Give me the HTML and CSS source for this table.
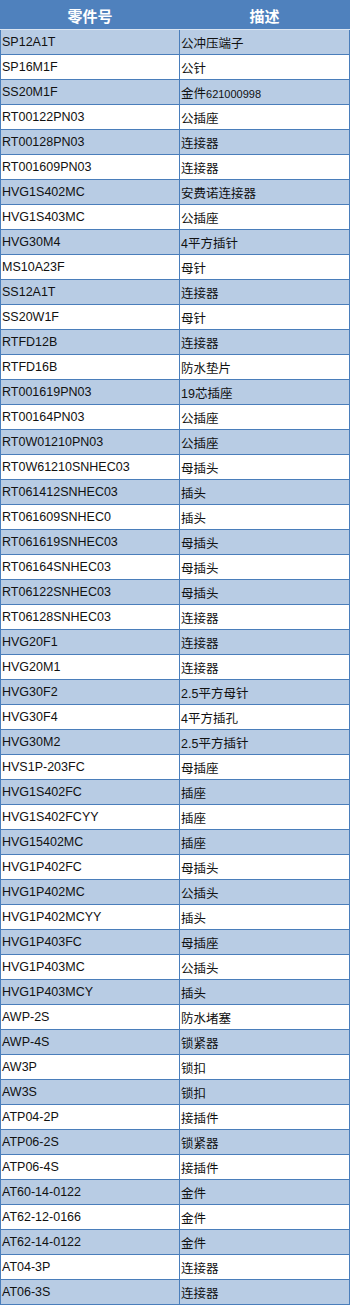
FILE: index.html
```html
<!DOCTYPE html>
<html lang="zh">
<head>
<meta charset="utf-8">
<title>零件号</title>
<link rel="stylesheet" href="styles.css">
</head>
<body>
<table class="parts">
<thead>
<tr><th class="c1">零件号</th><th class="c2">描述</th></tr>
</thead>
<tbody>
<tr><td>SP12A1T</td><td>公冲压端子</td></tr>
<tr><td>SP16M1F</td><td>公针</td></tr>
<tr><td>SS20M1F</td><td>金件<span class="num">621000998</span></td></tr>
<tr><td>RT00122PN03</td><td>公插座</td></tr>
<tr><td>RT00128PN03</td><td>连接器</td></tr>
<tr><td>RT001609PN03</td><td>连接器</td></tr>
<tr><td>HVG1S402MC</td><td>安费诺连接器</td></tr>
<tr><td>HVG1S403MC</td><td>公插座</td></tr>
<tr><td>HVG30M4</td><td>4平方插针</td></tr>
<tr><td>MS10A23F</td><td>母针</td></tr>
<tr><td>SS12A1T</td><td>连接器</td></tr>
<tr><td>SS20W1F</td><td>母针</td></tr>
<tr><td>RTFD12B</td><td>连接器</td></tr>
<tr><td>RTFD16B</td><td>防水垫片</td></tr>
<tr><td>RT001619PN03</td><td>19芯插座</td></tr>
<tr><td>RT00164PN03</td><td>公插座</td></tr>
<tr><td>RT0W01210PN03</td><td>公插座</td></tr>
<tr><td>RT0W61210SNHEC03</td><td>母插头</td></tr>
<tr><td>RT061412SNHEC03</td><td>插头</td></tr>
<tr><td>RT061609SNHEC0</td><td>插头</td></tr>
<tr><td>RT061619SNHEC03</td><td>母插头</td></tr>
<tr><td>RT06164SNHEC03</td><td>母插头</td></tr>
<tr><td>RT06122SNHEC03</td><td>母插头</td></tr>
<tr><td>RT06128SNHEC03</td><td>连接器</td></tr>
<tr><td>HVG20F1</td><td>连接器</td></tr>
<tr><td>HVG20M1</td><td>连接器</td></tr>
<tr><td>HVG30F2</td><td>2.5平方母针</td></tr>
<tr><td>HVG30F4</td><td>4平方插孔</td></tr>
<tr><td>HVG30M2</td><td>2.5平方插针</td></tr>
<tr><td>HVS1P-203FC</td><td>母插座</td></tr>
<tr><td>HVG1S402FC</td><td>插座</td></tr>
<tr><td>HVG1S402FCYY</td><td>插座</td></tr>
<tr><td>HVG15402MC</td><td>插座</td></tr>
<tr><td>HVG1P402FC</td><td>母插头</td></tr>
<tr><td>HVG1P402MC</td><td>公插头</td></tr>
<tr><td>HVG1P402MCYY</td><td>插头</td></tr>
<tr><td>HVG1P403FC</td><td>母插座</td></tr>
<tr><td>HVG1P403MC</td><td>公插头</td></tr>
<tr><td>HVG1P403MCY</td><td>插头</td></tr>
<tr><td>AWP-2S</td><td>防水堵塞</td></tr>
<tr><td>AWP-4S</td><td>锁紧器</td></tr>
<tr><td>AW3P</td><td>锁扣</td></tr>
<tr><td>AW3S</td><td>锁扣</td></tr>
<tr><td>ATP04-2P</td><td>接插件</td></tr>
<tr><td>ATP06-2S</td><td>锁紧器</td></tr>
<tr><td>ATP06-4S</td><td>接插件</td></tr>
<tr><td>AT60-14-0122</td><td>金件</td></tr>
<tr><td>AT62-12-0166</td><td>金件</td></tr>
<tr><td>AT62-14-0122</td><td>金件</td></tr>
<tr><td>AT04-3P</td><td>连接器</td></tr>
<tr><td>AT06-3S</td><td>连接器</td></tr>
</tbody>
</table>
</body>
</html>
```

FILE: styles.css
```css
html, body {
  margin: 0;
  padding: 0;
  background: #ffffff;
}

.parts {
  border-collapse: collapse;
  width: 350px;
  table-layout: fixed;
  font-family: "Liberation Sans", Arial, "Noto Sans CJK SC", sans-serif;
  font-size: 12.5px;
  color: #111111;
  border: 1px solid #4f81bd;
}

.parts th {
  background: #4f81bd;
  color: #ffffff;
  font-weight: bold;
  font-size: 15px;
  height: 29px;
  padding: 0;
  text-align: center;
  border: 1px solid #4f81bd;
  border-bottom: 1px solid #dbe5f1;
  box-sizing: border-box;
}

.parts .c1 {
  width: 179px;
}

.parts td {
  height: 25px;
  padding: 0 0 0 1px;
  border: 1px solid #4a7ebb;
  white-space: nowrap;
  overflow: hidden;
  vertical-align: middle;
  box-sizing: border-box;
}

.parts tbody tr:nth-child(odd) td {
  background: #b8cce4;
}

.parts tbody tr:nth-child(even) td {
  background: #ffffff;
}

.num {
  font-size: 11px;
}
```
